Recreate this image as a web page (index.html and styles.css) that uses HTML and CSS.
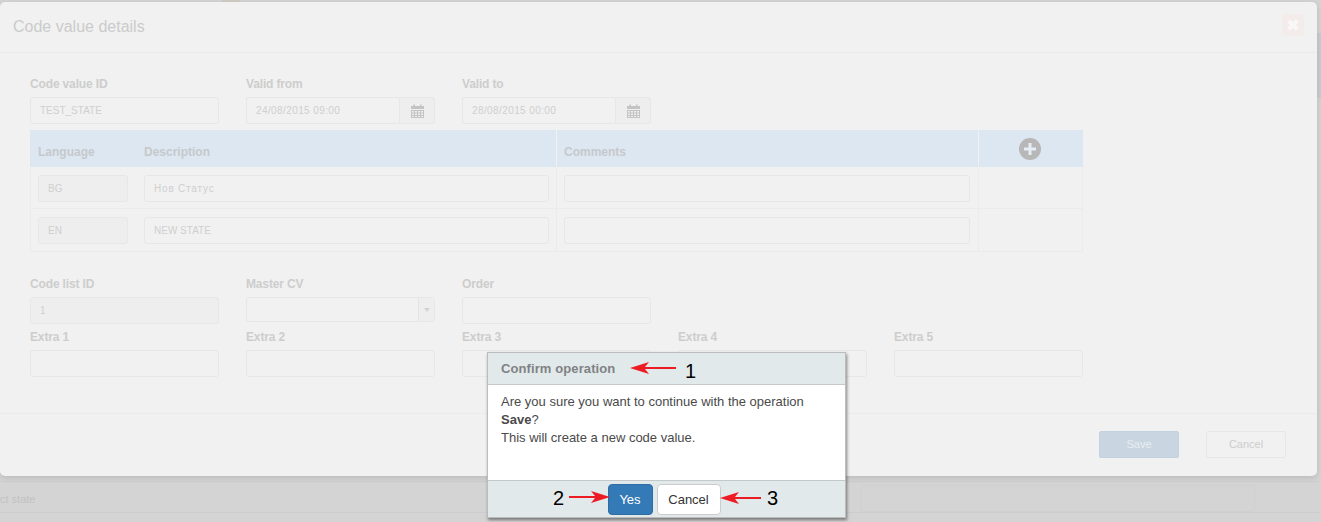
FILE: index.html
```html
<!DOCTYPE html>
<html lang="en">
<head>
  <meta charset="UTF-8" />
  <meta name="viewport" content="width=device-width, initial-scale=1.0" />
  <title>Code value details</title>
  <link rel="stylesheet" href="styles.css">
</head>
<body>
  <div class="backdrop">
    <div class="back-tab"></div>
    <div class="back-side"></div>
    <div class="back-row">ct state</div>
    <div class="back-box"></div>
  </div>

  <div class="modal">
    <div class="modal-header">
      <h2>Code value details</h2>
      <div class="close-btn">
        <svg width="16" height="16" viewBox="0 0 14 14"><path d="M2 4.500L4.500 2 7 4.500 9.500 2 12 4.500 9.500 7 12 9.500 9.500 12 7 9.500 4.500 12 2 9.500 4.500 7z" fill="#f9f7f7"/></svg>
      </div>
    </div>

    <div class="modal-body">
      <div class="form-row">
        <div class="field">
          <label>Code value ID</label>
          <div class="input">TEST_STATE</div>
        </div>
        <div class="field">
          <label>Valid from</label>
          <div class="input-group">
            <div class="input input-date">24/08/2015 09:00</div>
            <div class="addon">
              <svg width="13" height="14" viewBox="0 0 13 14"><path d="M0 2h2.500V0.500h1.500V2h5V0.500h1.500V2H13v3H0z" fill="#c4c4c4"/><path d="M0 6h13v8H0zM1 7v1.500h2V7zm3 0v1.500h2V7zm3 0v1.500h2V7zm3 0v1.500h2V7zM1 9.500V11h2V9.500zm3 0V11h2V9.500zm3 0V11h2V9.500zm3 0V11h2V9.500zM1 12v1h2v-1zm3 0v1h2v-1zm3 0v1h2v-1zm3 0v1h2v-1z" fill="#c4c4c4"/></svg>
            </div>
          </div>
        </div>
        <div class="field">
          <label>Valid to</label>
          <div class="input-group">
            <div class="input input-date">28/08/2015 00:00</div>
            <div class="addon">
              <svg width="13" height="14" viewBox="0 0 13 14"><path d="M0 2h2.500V0.500h1.500V2h5V0.500h1.500V2H13v3H0z" fill="#c4c4c4"/><path d="M0 6h13v8H0zM1 7v1.500h2V7zm3 0v1.500h2V7zm3 0v1.500h2V7zm3 0v1.500h2V7zM1 9.500V11h2V9.500zm3 0V11h2V9.500zm3 0V11h2V9.500zm3 0V11h2V9.500zM1 12v1h2v-1zm3 0v1h2v-1zm3 0v1h2v-1zm3 0v1h2v-1z" fill="#c4c4c4"/></svg>
            </div>
          </div>
        </div>
      </div>

      <div class="lang-table">
        <div class="lang-row lang-head">
          <div class="cell cell-main">
            <span class="head-lang">Language</span>
            <span>Description</span>
          </div>
          <div class="cell cell-comments">Comments</div>
          <div class="cell cell-add">
            <svg width="22" height="22" viewBox="0 0 22 22"><circle cx="11" cy="11" r="11" fill="#b7b7b7"/><path d="M9.500 5h3v4.500H17v3h-4.500V17h-3v-4.500H5v-3h4.500z" fill="#e6edf4"/></svg>
          </div>
        </div>
        <div class="lang-row lang-first">
          <div class="cell cell-main">
            <div class="input input-lang disabled">BG</div>
            <div class="input input-desc input-cyr">Нов Статус</div>
          </div>
          <div class="cell cell-comments"><div class="input"></div></div>
          <div class="cell cell-add"></div>
        </div>
        <div class="lang-row">
          <div class="cell cell-main">
            <div class="input input-lang disabled">EN</div>
            <div class="input input-desc">NEW STATE</div>
          </div>
          <div class="cell cell-comments"><div class="input"></div></div>
          <div class="cell cell-add"></div>
        </div>
      </div>

      <div class="form-row form-row-second">
        <div class="field">
          <label>Code list ID</label>
          <div class="input disabled">1</div>
        </div>
        <div class="field">
          <label>Master CV</label>
          <div class="select">
            <div class="select-arrow"></div>
          </div>
        </div>
        <div class="field">
          <label>Order</label>
          <div class="input"></div>
        </div>
      </div>
      <div class="form-row form-row-extra">
        <div class="field"><label>Extra 1</label><div class="input"></div></div>
        <div class="field"><label>Extra 2</label><div class="input"></div></div>
        <div class="field"><label>Extra 3</label><div class="input"></div></div>
        <div class="field"><label>Extra 4</label><div class="input"></div></div>
        <div class="field"><label>Extra 5</label><div class="input"></div></div>
      </div>
    </div>

    <div class="modal-footer">
      <div class="btn btn-save">Save</div>
      <div class="btn btn-cancel">Cancel</div>
    </div>
  </div>

  <div class="confirm">
    <div class="confirm-header">Confirm operation</div>
    <div class="confirm-body">
      Are you sure you want to continue with the operation<br>
      <b>Save</b>?<br>
      This will create a new code value.
    </div>
    <div class="confirm-footer">
      <div class="confirm-btn confirm-yes">Yes</div>
      <div class="confirm-btn confirm-no">Cancel</div>
    </div>
  </div>

  <!-- annotations on top of the screenshot -->
  <svg class="arrow arrow-1" width="46" height="14" viewBox="0 0 46 14"><path d="M0 7L19 1 15 6H46V8H15L19 13z" fill="#ed1c24"/></svg>
  <span class="note note-1">1</span>
  <svg class="arrow arrow-2" width="41" height="14" viewBox="0 0 41 14"><path d="M41 7L22 1 26 6H0V8H26L22 13z" fill="#ed1c24"/></svg>
  <span class="note note-2">2</span>
  <svg class="arrow arrow-3" width="41" height="14" viewBox="0 0 41 14"><path d="M0 7L19 1 15 6H41V8H15L19 13z" fill="#ed1c24"/></svg>
  <span class="note note-3">3</span>
</body>
</html>
```

FILE: styles.css
```css
* {
  box-sizing: border-box;
}
html, body {
  height: 100%;
}
body {
  margin: 0;
  background-color: #d4d4d4;
  color: #cdcdcd;
  font-family: 'Liberation Sans', Arial, sans-serif;
  font-size: 11px;
  overflow: hidden;
  position: relative;
}
.backdrop {
  height: 522px;
  position: relative;
  overflow: hidden;
}
.back-tab {
  position: absolute;
  left: 222px;
  top: 0;
  width: 18px;
  height: 2px;
  background-color: #cfccc4;
}
.back-side {
  position: absolute;
  right: 0;
  top: 33px;
  width: 4px;
  height: 65px;
  background-color: #c6ced0;
}
.back-row {
  position: absolute;
  left: 0;
  right: 0;
  top: 481px;
  height: 32px;
  padding-top: 11px;
  border-top: 1px solid #cfcfcf;
  border-bottom: 1px solid #cdcdcd;
  color: #c2c2c2;
  font-size: 11px;
}
.back-box {
  position: absolute;
  left: 860px;
  top: 485px;
  width: 395px;
  height: 27px;
  border: 1px solid #d0d0d0;
  border-radius: 3px;
}

.modal {
  position: absolute;
  left: 0;
  top: 2px;
  width: 1317px;
  height: 474px;
  background-color: #f1f1f1;
  border-radius: 5px;
  box-shadow: 0 2px 6px rgba(0, 0, 0, 0.12);
  display: flex;
  flex-direction: column;
}
.modal-header {
  height: 51px;
  padding: 0 13px;
  border-bottom: 1px solid #ebebeb;
  display: flex;
  align-items: center;
  justify-content: space-between;
}
.modal-header h2 {
  margin: 0;
  font-size: 16px;
  font-weight: 400;
  color: #cbcbcb;
}
.close-btn {
  width: 22px;
  height: 22px;
  background-color: #f4eceb;
  border-radius: 4px;
  display: flex;
  align-items: center;
  justify-content: center;
  margin-bottom: 4px;
}
.modal-body {
  flex: 1;
  padding: 24px 30px 0;
}
.form-row {
  display: grid;
  grid-template-columns: repeat(5, 189px);
  column-gap: 27px;
}
.form-row-second {
  margin-top: 25px;
}
.form-row-extra {
  margin-top: 6px;
}
label {
  display: block;
  font-size: 12px;
  font-weight: 700;
  line-height: 14px;
  height: 20px;
  color: #cdcdcd;
  letter-spacing: -0.15px;
}
.input {
  height: 27px;
  flex: 1;
  min-width: 0;
  border: 1px solid #e7e7e7;
  border-radius: 3px;
  padding: 0 9px;
  line-height: 25px;
  color: #cfcfcf;
  font-size: 10px;
  background-color: #f1f1f1;
}
.input.disabled {
  background-color: #eeeeee;
}
.input-date {
  letter-spacing: 0.4px;
}
.input-cyr {
  letter-spacing: 0.8px;
}
.input-group {
  display: flex;
  height: 27px;
}
.input-group .input {
  border-radius: 3px 0 0 3px;
  border-right: none;
}
.addon {
  width: 36px;
  border: 1px solid #e7e7e7;
  border-radius: 0 3px 3px 0;
  background-color: #eeeeee;
  display: flex;
  align-items: center;
  justify-content: center;
}
.select {
  height: 25px;
  border: 1px solid #e7e7e7;
  border-radius: 3px;
  display: flex;
  justify-content: flex-end;
}
.select-arrow {
  width: 16px;
  border-left: 1px solid #e3e3e3;
  background-color: #eeeeee;
  position: relative;
}
.select-arrow::after {
  content: '';
  position: absolute;
  left: 5px;
  top: 10px;
  border-left: 3px solid transparent;
  border-right: 3px solid transparent;
  border-top: 4px solid #d2d2d2;
}

.lang-table {
  width: 1053px;
  margin-top: 6px;
  border: 1px solid #ebebeb;
  border-top: none;
}
.lang-row {
  display: grid;
  grid-template-columns: 526px 422px 1fr;
  height: 42px;
  border-bottom: 1px solid #ebebeb;
}
.lang-row:last-child {
  border-bottom: none;
}
.lang-first .cell {
  padding-top: 1px;
}
.lang-head {
  height: 37px;
  grid-template-columns: 527px 422px 1fr;
  background-color: #dde7f1;
  border-bottom: none;
  font-size: 12px;
  font-weight: 700;
  color: #c6c9cc;
  margin: 0 -1px 0 -1px;
}
.cell {
  display: flex;
  align-items: center;
  padding: 0 7px;
  border-right: 1px solid #ebebeb;
}
.cell:last-child {
  border-right: none;
}
.cell-comments {
  padding-right: 8px;
}
.lang-head .cell {
  border-color: #f1f1f1;
  padding-top: 7px;
}
.lang-head .cell-main {
  padding-left: 8px;
}
.lang-head .cell-add {
  padding: 0 2px 0 0;
  justify-content: center;
}
.head-lang {
  width: 106px;
}
.input-lang {
  flex: none;
  width: 90px;
  margin-right: 16px;
}
.input-desc {
  flex: 1;
}

.modal-footer {
  height: 63px;
  border-top: 1px solid #ebebeb;
  padding: 17px 31px 0 0;
  display: flex;
  justify-content: flex-end;
  gap: 27px;
}
.btn {
  width: 80px;
  height: 27px;
  border-radius: 2px;
  text-align: center;
  line-height: 25px;
  font-size: 11px;
}
.btn-save {
  background-color: #c9d6e2;
  border: 1px solid #c3d2df;
  color: #e8edf1;
}
.btn-cancel {
  border: 1px solid #e7e7e7;
  color: #cdcdcd;
}

.confirm {
  position: absolute;
  left: 487px;
  top: 352px;
  width: 359px;
  height: 166px;
  border: 1px solid #bcbcbc;
  box-shadow: 1px 2px 3px rgba(0, 0, 0, 0.45);
  background-color: #fff;
  display: flex;
  flex-direction: column;
  color: #4a4a4a;
}
.confirm-header {
  height: 32px;
  padding: 0 13px;
  line-height: 31px;
  background-color: #e2e9ea;
  border-bottom: 1px solid #c4c8c9;
  color: #808284;
  font-size: 13px;
  font-weight: 700;
  letter-spacing: 0.1px;
}
.confirm-body {
  flex: 1;
  padding: 8px 13px;
  font-size: 13px;
  line-height: 18px;
}
.confirm-footer {
  height: 37px;
  padding-right: 5px;
  background-color: #e2e9ea;
  border-top: 1px solid #c4c8c9;
  display: flex;
  justify-content: center;
  align-items: center;
  gap: 4px;
}
.confirm-btn {
  height: 31px;
  border-radius: 4px;
  font-size: 13px;
  text-align: center;
  line-height: 29px;
}
.confirm-yes {
  width: 45px;
  background-color: #337ab7;
  border: 1px solid #2e6da4;
  color: #fff;
}
.confirm-no {
  width: 64px;
  background-color: #fff;
  border: 1px solid #ccc;
  color: #333;
}

.arrow {
  position: absolute;
}
.arrow-1 {
  left: 630px;
  top: 361px;
}
.arrow-2 {
  left: 569px;
  top: 490px;
}
.arrow-3 {
  left: 720px;
  top: 491px;
}
.note {
  position: absolute;
  color: #000;
  font-size: 20px;
  line-height: 22px;
}
.note-1 {
  left: 685px;
  top: 360px;
}
.note-2 {
  left: 553px;
  top: 487px;
}
.note-3 {
  left: 767px;
  top: 487px;
}
```
